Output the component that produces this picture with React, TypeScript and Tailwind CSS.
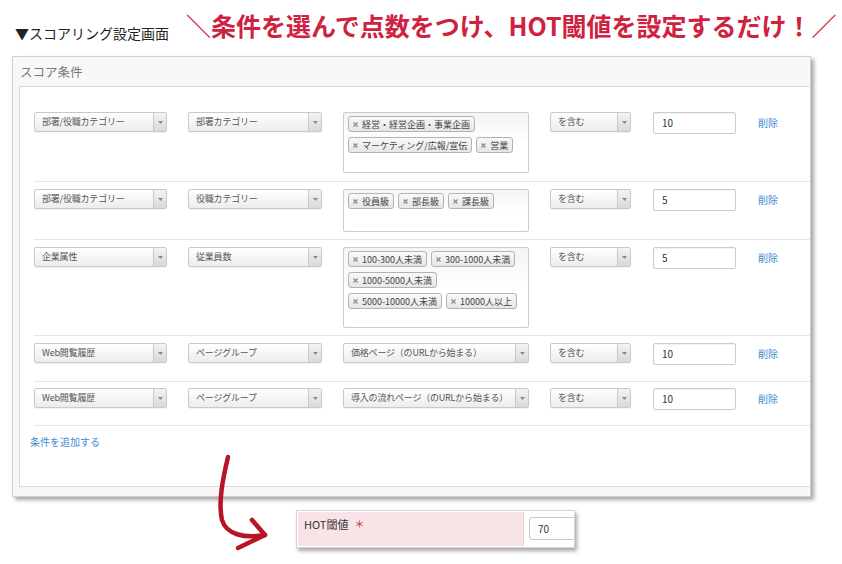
import React from "react";

type Row = {
  cat: string;
  sub: string;
  tags?: string[][];
  boxH?: string;
  page?: string;
  value: string;
  pad: string;
};

const rows: Row[] = [
  {
    cat: "部署/役職カテゴリー",
    sub: "部署カテゴリー",
    tags: [["経営・経営企画・事業企画"], ["マーケティング/広報/宣伝", "営業"]],
    boxH: "h-[61px]",
    value: "10",
    pad: "pt-[8px] pb-[8px]",
  },
  {
    cat: "部署/役職カテゴリー",
    sub: "役職カテゴリー",
    tags: [["役員級", "部長級", "課長級"]],
    boxH: "h-[43px]",
    value: "5",
    pad: "pt-[7px] pb-[7px]",
  },
  {
    cat: "企業属性",
    sub: "従業員数",
    tags: [["100-300人未満", "300-1000人未満"], ["1000-5000人未満"], ["5000-10000人未満", "10000人以上"]],
    boxH: "h-[81px]",
    value: "5",
    pad: "pt-[7px] pb-[7px]",
  },
  {
    cat: "Web閲覧履歴",
    sub: "ページグループ",
    page: "価格ページ（のURLから始まる）",
    value: "10",
    pad: "pt-[7px] pb-[16px]",
  },
  {
    cat: "Web閲覧履歴",
    sub: "ページグループ",
    page: "導入の流れページ（のURLから始まる）",
    value: "10",
    pad: "pt-[6px] pb-[15px]",
  },
];

const Select = ({ label, className }: { label: string; className: string }) => (
  <div
    className={`flex h-[20px] shrink-0 rounded-[2px] border border-[#c9c9c9] bg-linear-to-b from-white to-[#ececec] shadow-[0_1px_1px_rgba(0,0,0,0.06)] ${className}`}
  >
    <div className="flex-1 overflow-hidden whitespace-nowrap pl-[7px] text-[9px] leading-[18px] tracking-[-0.2px] text-[#555]">
      {label}
    </div>
    <div className="flex w-[13px] shrink-0 items-center justify-center border-l border-[#c9c9c9] bg-linear-to-b from-[#f3f3f3] to-[#d9d9d9]">
      <svg width="5" height="3" viewBox="0 0 5 3">
        <polygon points="0,0 5,0 2.5,3" fill="#8a8a8a" />
      </svg>
    </div>
  </div>
);

const Tag = ({ label }: { label: string }) => (
  <div className="flex h-[16px] items-center gap-[4px] rounded-[3px] border border-[#b3b3b3] bg-linear-to-b from-[#f9f9f9] to-[#e6e6e6] pl-[4px] pr-[4px]">
    <svg width="5" height="5" viewBox="0 0 5 5">
      <path d="M0.5 0.5 L4.5 4.5 M4.5 0.5 L0.5 4.5" stroke="#8c8c8c" strokeWidth="1.3" />
    </svg>
    <span className="text-[9px] leading-none whitespace-nowrap text-[#444]">{label}</span>
  </div>
);

export default function App() {
  return (
    <div
      className="relative h-[564px] w-[842px] overflow-hidden bg-white"
      style={{ fontFamily: '"Noto Sans CJK JP", "Noto Sans", sans-serif' }}
    >
      {/* title line */}
      <div className="flex h-[56px] items-start">
        <div className="mt-[24px] w-[186px] pl-[15px] text-[14px] leading-[18px] text-[#222]">▼スコアリング設定画面</div>
        <div className="mt-[10px] text-[25px] font-bold leading-[30px] whitespace-nowrap text-[#cf2140]">
          ＼条件を選んで点数をつけ、HOT閾値を設定するだけ！／
        </div>
      </div>

      {/* score panel */}
      <div className="ml-[12px] w-[799px] border border-[#cfcfcf] bg-[#f8f8f8] pb-[9px] pl-[6px] shadow-[3px_3px_4px_rgba(0,0,0,0.35)]">
        <div className="h-[29px] pl-[1px] text-[12.5px] leading-[29px] text-[#777]">スコア条件</div>
        <div className="border border-r-0 border-[#dcdcdc] bg-white pb-[38px] pl-[10px] pt-[17px]">
          <div className="ml-[4px]">
            {rows.map((r, i) => (
              <div key={i} className={`flex items-start border-b border-[#e6e6e6] ${r.pad}`}>
                <Select label={r.cat} className="w-[133px]" />
                <Select label={r.sub} className="ml-[21px] w-[134px]" />
                {r.tags ? (
                  <div
                    className={`ml-[21px] flex w-[186px] shrink-0 flex-col gap-[5px] rounded-[2px] border border-[#cccccc] bg-linear-to-b from-[#f4f4f4] via-white to-white pl-[4px] pt-[3px] ${r.boxH}`}
                  >
                    {r.tags.map((line, j) => (
                      <div key={j} className="flex gap-[4px]">
                        {line.map((t) => (
                          <Tag key={t} label={t} />
                        ))}
                      </div>
                    ))}
                  </div>
                ) : (
                  <Select label={r.page || ""} className="ml-[21px] w-[186px]" />
                )}
                <Select label="を含む" className="ml-[21px] w-[81px]" />
                <div className="ml-[22px] h-[22px] w-[83px] shrink-0 rounded-[2px] border border-[#cccccc] bg-white pl-[8px] text-[10px] leading-[20px] text-[#333] shadow-[inset_0_1px_1px_rgba(0,0,0,0.06)]">
                  {r.value}
                </div>
                <div className="ml-[22px] text-[10px] leading-[22px] text-[#3f8bd0]">削除</div>
              </div>
            ))}
          </div>
          <div className="mt-[10px] text-[10px] leading-[12px] text-[#3f8bd0]">条件を追加する</div>
        </div>
      </div>

      {/* HOT threshold excerpt */}
      <div className="ml-[296px] mt-[13px] flex h-[38px] w-[279px] overflow-hidden border border-[#d6d6d6] bg-white shadow-[2px_3px_4px_rgba(0,0,0,0.35)]">
        <div className="m-[1px] mr-0 flex w-[226px] shrink-0 items-start border-r border-[#ead6d8] bg-[#f8e4e6] pl-[6px] pt-[5px]">
          <span className="text-[11px] leading-[14px] text-[#333]">HOT閾値</span>
          <span className="ml-[6px] text-[10px] leading-[14px] text-[#c0392b]">＊</span>
        </div>
        <div className="ml-[5px] mt-[6px] h-[23px] w-[70px] shrink-0 rounded-[3px] border border-[#c8c8c8] pl-[8px] text-[10px] leading-[21px] text-[#333]">
          70
        </div>
      </div>

      {/* red arrow annotation */}
      <svg className="absolute left-[210px] top-[450px]" width="70" height="110" viewBox="0 0 70 110">
        <path
          d="M18 7 C 13 28, 8 52, 12 70 C 16 84, 34 89, 55 85"
          fill="none"
          stroke="#b71428"
          strokeWidth="4.5"
          strokeLinecap="round"
        />
        <path
          d="M42 70 L55 85 L28 98"
          fill="none"
          stroke="#b71428"
          strokeWidth="4.5"
          strokeLinecap="round"
          strokeLinejoin="round"
        />
      </svg>
    </div>
  );
}
